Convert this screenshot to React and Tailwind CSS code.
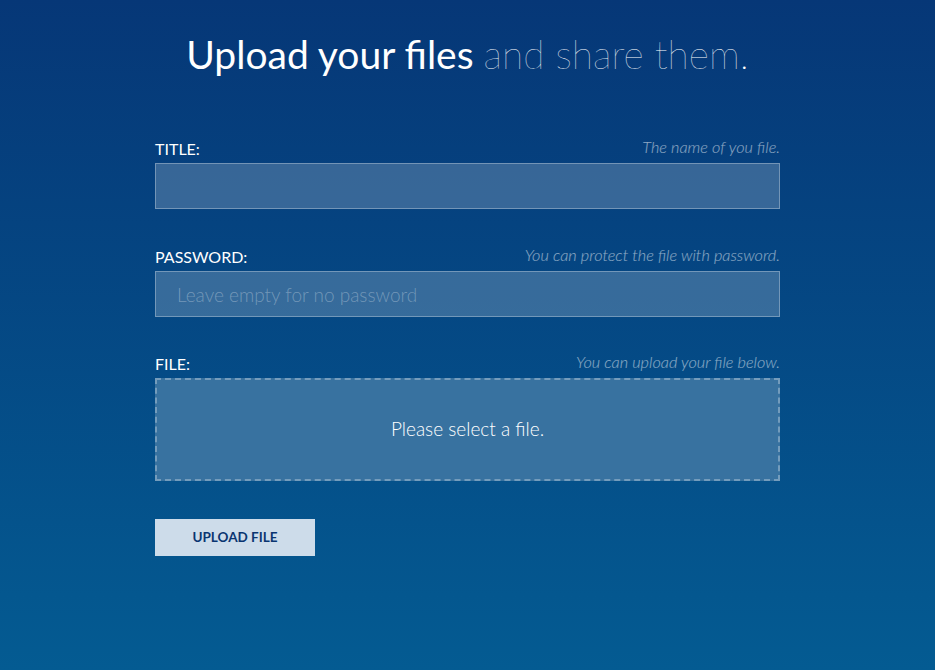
export default function App() {
  return (
    <div className="min-h-[670px] w-full bg-gradient-to-b from-[#063777] to-[#045b92] font-['Lato','Liberation_Sans',sans-serif] text-white">
      <div className="mx-auto w-[625px] pt-[30px]">
        <h1 className="text-center text-[39px] leading-[48px]">
          <span className="font-normal">Upload your files</span>{" "}
          <span className="font-thin text-white">and share them.</span>
        </h1>

        <form className="mt-[61px]" onSubmit={(e) => e.preventDefault()}>
          <div className="mb-[4px] flex h-[20px] items-end justify-between">
            <label className="text-[16px] leading-[20px] uppercase">Title:</label>
            <span className="mb-[4px] text-[16.3px] font-light italic leading-[16px] text-white/55">
              The name of you file.
            </span>
          </div>
          <input
            type="text"
            className="block h-[46px] w-full border border-white/30 bg-white/20 px-[21px] text-[19px] font-light text-white outline-none"
          />

          <div className="mb-[4px] mt-[38px] flex h-[20px] items-end justify-between">
            <label className="text-[16px] leading-[20px] uppercase">Password:</label>
            <span className="mb-[4px] text-[16.3px] font-light italic leading-[16px] text-white/55">
              You can protect the file with password.
            </span>
          </div>
          <input
            type="password"
            placeholder="Leave empty for no password"
            className="block h-[46px] w-full border border-white/30 bg-white/20 px-[21px] text-[19px] font-light text-white outline-none placeholder:text-white/30"
          />

          <div className="mb-[4px] mt-[37px] flex h-[20px] items-end justify-between">
            <label className="text-[16px] leading-[20px] uppercase">File:</label>
            <span className="mb-[4px] text-[16.3px] font-light italic leading-[16px] text-white/55">
              You can upload your file below.
            </span>
          </div>
          <div className="flex h-[103px] w-full items-center justify-center border-2 border-dashed border-white/30 bg-[#3872a0] text-[19px] font-light">
            Please select a file.
          </div>

          <button
            type="submit"
            className="mt-[38px] block h-[37px] w-[160px] bg-[#cddcea] text-[13.5px] font-bold uppercase text-[#0a3571]"
          >
            Upload file
          </button>
        </form>
      </div>
    </div>
  );
}
